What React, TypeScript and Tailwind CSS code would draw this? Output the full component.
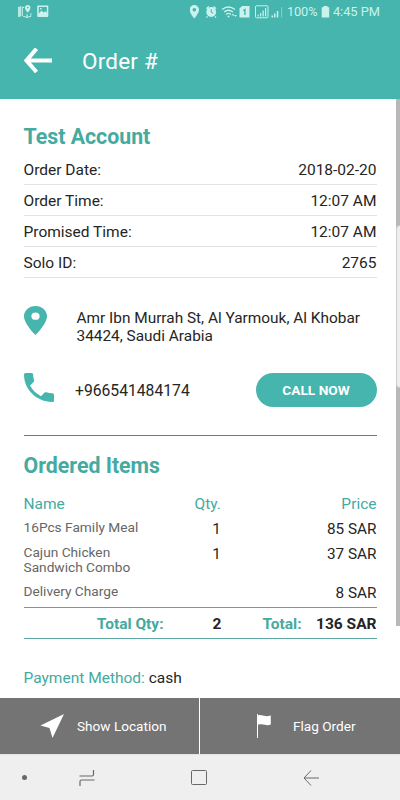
import type { ReactNode } from 'react';

const details = [
  { label: 'Order Date:', value: '2018-02-20' },
  { label: 'Order Time:', value: '12:07 AM' },
  { label: 'Promised Time:', value: '12:07 AM' },
  { label: 'Solo ID:', value: '2765' },
];

function StatusBar() {
  return (
    <div className="flex h-6 items-center justify-between pl-[18px] pr-[20px] text-[#c9f3ec]">
      <svg className="-mt-[2px]" width="31" height="13" viewBox="0 0 31 13" fill="currentColor">
        <path d="M0 2l3.2-1v10.3L0 12.300z" opacity=".85" />
        <path d="M3.800 1.200l1 .4v9.700l-1-.4zM5 2h1.200v1H5zM5 10.700l3.500 1.100V9h1v2.800l3-1V8h.8v3.500L9 13l-4-1.400z" />
        <path d="M9.700 0a2.700 2.700 0 0 1 2.700 2.700c0 2-2.700 5-2.700 5S7 4.700 7 2.700A2.700 2.700 0 0 1 9.700 0z" />
        <circle cx="9.700" cy="2.600" r=".8" fill="#45b5ad" />
        <path fillRule="evenodd" d="M20 .5h9.500a.8.8 0 0 1 .8.8v9.800a.8.8 0 0 1-.8.800H20a.8.8 0 0 1-.8-.8V1.300a.8.8 0 0 1 .8-.8zm.8 1.500v6.500l2.700-3 2.200 2 1.500-1.300 1.600 1.600V2zM22 3h1.500v1.500H22z" />
      </svg>
      <div className="flex items-center">
        <svg className="-mt-px" width="94" height="14" viewBox="0 0 94 14" fill="currentColor">
          <path fillRule="evenodd" d="M4.300 0a4.700 4.700 0 0 1 4.700 4.700C9 8.300 4.300 13.500 4.300 13.500S-.4 8.300-.4 4.700A4.700 4.700 0 0 1 4.300 0zm0 3a1.800 1.800 0 1 0 0 3.600 1.800 1.800 0 0 0 0-3.600z" />
          <circle cx="21.200" cy="7" r="4.900" />
          <path d="M16.500 3.800l2.300-2.300M25.900 3.800l-2.300-2.300M17.500 11.500l-1 1M25 11.500l1 1" stroke="currentColor" strokeWidth="1.500" />
          <path d="M21.200 4.200V7.200l2 1" fill="none" stroke="#45b5ad" strokeWidth="1" />
          <path d="M32 4.500q6.500-5 13 0M34 7q4.500-3.500 9 0M36 9.400q2.500-2 5 0" fill="none" stroke="currentColor" strokeWidth="1.300" />
          <circle cx="38.500" cy="11.500" r="1" />
          <path d="M41.500 10.500l1.500-2 1.500 2zM44 10h3l-1.500 2z" />
          <path d="M49.500 3.500l2.500-2.500h7.500v11.500h-10z" />
          <path d="M53.200 5.500l1.700-1v5.500" fill="none" stroke="#45b5ad" strokeWidth="1.400" />
          <rect x="65.500" y=".8" width="12.500" height="12" rx="1" fill="none" stroke="currentColor" />
          <path d="M67.500 9.500h1.200v2h-1.200zM70 8h1.200v3.500H70zM72.500 5.500h1.300v6h-1.300zM75 3h1.200v8.500H75zM81.500 10.500h1.500v2h-1.500zM84 8.500h1.500v4H84zM86.800 6h1.500v6.500h-1.500z" />
          <path d="M91 2h1.200v10.500H91z" opacity=".4" />
        </svg>
        <span className="ml-[3px] w-[31px] whitespace-nowrap text-[12.800px] tracking-[-0.100px]">100%</span>
        <svg className="-mt-px ml-[3px]" width="9" height="12" viewBox="0 0 9 12" fill="currentColor">
          <path d="M2.500 0h4v1.200h1.700v10.300H.7V1.200h1.800z" />
        </svg>
        <span className="ml-[3px] whitespace-nowrap text-[12.800px]">4:45 PM</span>
      </div>
    </div>
  );
}

function Item({ name, qty, price, className }: { name: ReactNode; qty: string; price: string; className: string }) {
  return (
    <div className={`flex items-start justify-between ${className}`}>
      <span className="w-[152px] text-[13.700px] leading-[15px] text-[#666]">{name}</span>
      <span className="w-[82px] text-center text-[15.300px] leading-[18px]">{qty}</span>
      <span className="w-[119px] text-right text-[15.300px] leading-[18px]">{price}</span>
    </div>
  );
}

export default function App() {
  return (
    <div className="flex h-[800px] w-[400px] flex-col overflow-hidden bg-white font-['Roboto',sans-serif] text-[15.500px] text-[#252525]">
      <header className="h-[99px] shrink-0 bg-[#45b5ad]">
        <StatusBar />
        <div className="flex h-[75px] items-center pl-[24px] text-white">
          <svg className="-mt-[2px]" width="29" height="26" viewBox="0 0 29 26" fill="none" stroke="currentColor" strokeWidth="4">
            <path d="M28 12.500H2.500M12.500.7L2.500 12.500l10 11.500" />
          </svg>
          <h1 className="ml-[29px] text-[22.500px] tracking-[0.200px]">Order #</h1>
        </div>
      </header>

      <main className="relative h-[599px] shrink-0 pl-[23.500px] pr-[23.500px]">
        <h2 className="flex h-[55px] items-end pb-px text-[21.300px] font-bold text-[#45aaa0]">Test Account</h2>
        {details.map((row) => (
          <div key={row.label} className="flex h-[31px] items-center justify-between border-b border-[#dfe5e5] pt-[4px]">
            <span>{row.label}</span>
            <span>{row.value}</span>
          </div>
        ))}

        <div className="mt-[28px] flex h-[38px]">
          <svg width="23" height="29" viewBox="5 2 14 20" preserveAspectRatio="none" fill="#45b5ad">
            <path d="M12 2C8.130 2 5 5.130 5 9c0 5.250 7 13 7 13s7-7.750 7-13c0-3.870-3.130-7-7-7zm0 9.500a2.500 2.500 0 0 1 0-5 2.500 2.500 0 0 1 0 5z" />
          </svg>
          <p className="ml-[30px] whitespace-nowrap pt-[3px] text-[15.400px] leading-[18px]">Amr Ibn Murrah St, Al Yarmouk, Al Khobar<br />34424, Saudi Arabia</p>
        </div>

        <div className="mt-[29px] flex h-[34px] items-center">
          <svg className="relative bottom-[2.500px]" width="30" height="29" viewBox="3 3 18 18" preserveAspectRatio="none" fill="#45b5ad">
            <path d="M6.620 10.790c1.440 2.830 3.760 5.140 6.590 6.590l2.200-2.200c.27-.27.670-.36 1.020-.24 1.120.37 2.330.57 3.570.57.550 0 1 .45 1 1V20c0 .55-.45 1-1 1-9.390 0-17-7.610-17-17 0-.55.450-1 1-1h3.500c.550 0 1 .450 1 1 0 1.250.200 2.450.570 3.570.110.350.030.740-.250 1.020l-2.200 2.200z" />
          </svg>
          <span className="ml-[21.500px] pt-px text-[15.700px]">+966541484174</span>
          <button className="ml-auto h-[34px] w-[121px] rounded-full bg-[#45b5ad] text-[13.700px] font-bold text-white">CALL NOW</button>
        </div>

        <section className="mt-[28px] border-t border-[#777]">
          <h2 className="flex h-[59px] items-center text-[21.300px] font-bold text-[#45aaa0]">Ordered Items</h2>
          <div className="flex h-[18px] items-center justify-between pt-[2px] text-[#45aaa0]">
            <span className="w-[171px]">Name</span>
            <span className="w-[27px]">Qty.</span>
            <span className="w-[155px] text-right">Price</span>
          </div>
          <Item className="mt-[7px] h-[25px]" name="16Pcs Family Meal" qty="1" price="85 SAR" />
          <Item className="h-[39px]" name={<>Cajun Chicken<br />Sandwich Combo</>} qty="1" price="37 SAR" />
          <Item className="h-[23px]" name="Delivery Charge" qty="" price="8 SAR" />
          <div className="flex h-[32px] items-center border-y border-[#5da8a2] pt-[3px] font-bold">
            <span className="w-[140px] text-right text-[#45aaa0]">Total Qty:</span>
            <span className="w-[107px] text-center">2</span>
            <span className="-ml-[8px] text-[#45aaa0]">Total:</span>
            <span className="ml-auto">136 SAR</span>
          </div>
        </section>
        <p className="mt-[28px]"><span className="text-[#45aaa0]">Payment Method:</span> cash</p>
        <div className="absolute right-0 top-0 h-[527px] w-1 bg-[#b8b8b8]" />
        <div className="absolute right-0 top-[126px] h-[163px] w-1 rounded-l border border-r-0 border-[#ccc] bg-[#eee]" />
      </main>

      <footer className="flex h-[57px] shrink-0 border-b border-[#e4e4e4] bg-[#747474] text-[13.600px] text-white">
        <button className="flex w-[200px] items-center border-r border-white pl-[40px]">
          <svg width="25" height="24" viewBox="0 0 25 24" fill="currentColor"><path d="M24 0L.5 11.500 9.500 14 12.500 24z" /></svg>
          <span className="ml-[12px]">Show Location</span>
        </button>
        <button className="flex w-[200px] items-center pl-[57px]">
          <svg width="14" height="24" viewBox="0 0 14 24" fill="currentColor"><path d="M0 0h1v24H0zM1 1.500c4-1.500 5 2 12.800 0v9c-5 2-7-1.500-12.800.300z" /></svg>
          <span className="ml-[22px]">Flag Order</span>
        </button>
      </footer>
      <nav className="flex h-[45px] items-center bg-[#efefef] text-[#686868]">
        <span className="ml-[22px] h-[5px] w-[5px] rounded-full bg-[#686868]" />
        <svg className="ml-[52px]" width="17" height="18" viewBox="0 0 17 18" fill="none" stroke="currentColor" strokeWidth="1.200"><path d="M0.500 7h12.500q1.500 0 1.500-1.500V1M15.500 11h-13q-1.500 0-1.500 1.500V17" /></svg>
        <svg className="ml-[94px]" width="18" height="16" viewBox="0 0 18 16" fill="none" stroke="currentColor"><rect x="1.500" y=".5" width="15" height="14" rx="1" /></svg>
        <svg className="ml-[95px]" width="17" height="16" viewBox="0 0 17 16" fill="none" stroke="currentColor"><path d="M16 8H1.500M8 .5L1 8l7 7.500" /></svg>
      </nav>
    </div>
  );
}
